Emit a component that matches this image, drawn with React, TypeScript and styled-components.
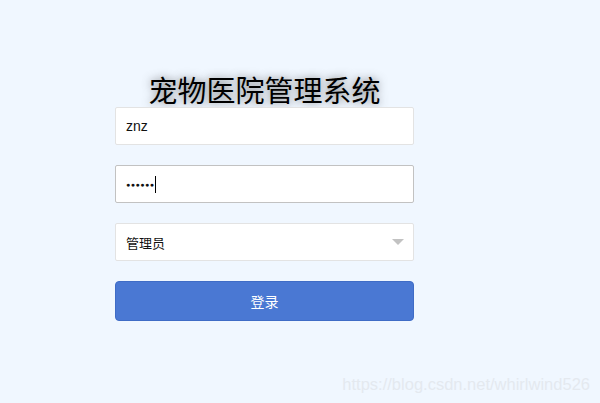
import styled, { createGlobalStyle } from "styled-components";

const Global = createGlobalStyle`
  html, body {
    margin: 0;
    padding: 0;
    background: #f0f7ff;
    font-family: "Liberation Sans", "Noto Sans CJK SC", sans-serif;
  }
`;

const Page = styled.div`
  position: relative;
  width: 600px;
  height: 403px;
  background: #f0f7ff;
  display: flex;
  justify-content: flex-start;
  padding-top: 72px;
  box-sizing: border-box;
`;

const Form = styled.div`
  margin-left: 115px;
  width: 299px;
  display: flex;
  flex-direction: column;
`;

const Title = styled.h1`
  margin: 0 0 1px;
  text-align: center;
  font-family: "Noto Sans CJK SC", sans-serif;
  font-weight: 400;
  font-size: 29px;
  line-height: 34px;
  color: #000;
  text-shadow: 0 0 8px rgba(70, 70, 70, 0.7);
`;

const Field = styled.div<{ $dark?: boolean }>`
  height: 38px;
  box-sizing: border-box;
  background: #fff;
  border: 1px solid ${(p) => (p.$dark ? "#c2c2c2" : "#e3e3e3")};
  border-radius: 2px;
  display: flex;
  align-items: center;
  padding: 0 10px;
  font-size: 14px;
  color: #111;
  margin-bottom: 20px;
`;

const Dots = styled.span`
  font-size: 7px;
  letter-spacing: 0.5px;
`;

const Caret = styled.span`
  display: inline-block;
  width: 1px;
  height: 17px;
  background: #000;
  margin-left: 1px;
`;

const SelectText = styled.span`
  flex: 1;
  font-family: "Noto Sans CJK SC", sans-serif;
  font-size: 13px;
`;

const Arrow = styled.span`
  width: 0;
  height: 0;
  border-left: 6px solid transparent;
  border-right: 6px solid transparent;
  border-top: 6px solid #c2c2c2;
  margin-right: -1px;
`;

const Button = styled.button`
  height: 40px;
  border: 1px solid #3f6cc6;
  border-radius: 4px;
  background: #4a78d3;
  color: #fff;
  font-family: "Noto Sans CJK SC", sans-serif;
  font-size: 14px;
  margin-top: 0;
`;

const Watermark = styled.div`
  position: absolute;
  right: 10px;
  bottom: 9px;
  font-family: "Liberation Sans", sans-serif;
  font-size: 16.5px;
  color: #e4e9ef;
`;

export default function App() {
  return (
    <Page>
      <Global />
      <Form>
        <Title>宠物医院管理系统</Title>
        <Field>znz</Field>
        <Field $dark>
          <Dots>●●●●●●</Dots>
          <Caret />
        </Field>
        <Field>
          <SelectText>管理员</SelectText>
          <Arrow />
        </Field>
        <Button>登录</Button>
      </Form>
      <Watermark>https://blog.csdn.net/whirlwind526</Watermark>
    </Page>
  );
}
